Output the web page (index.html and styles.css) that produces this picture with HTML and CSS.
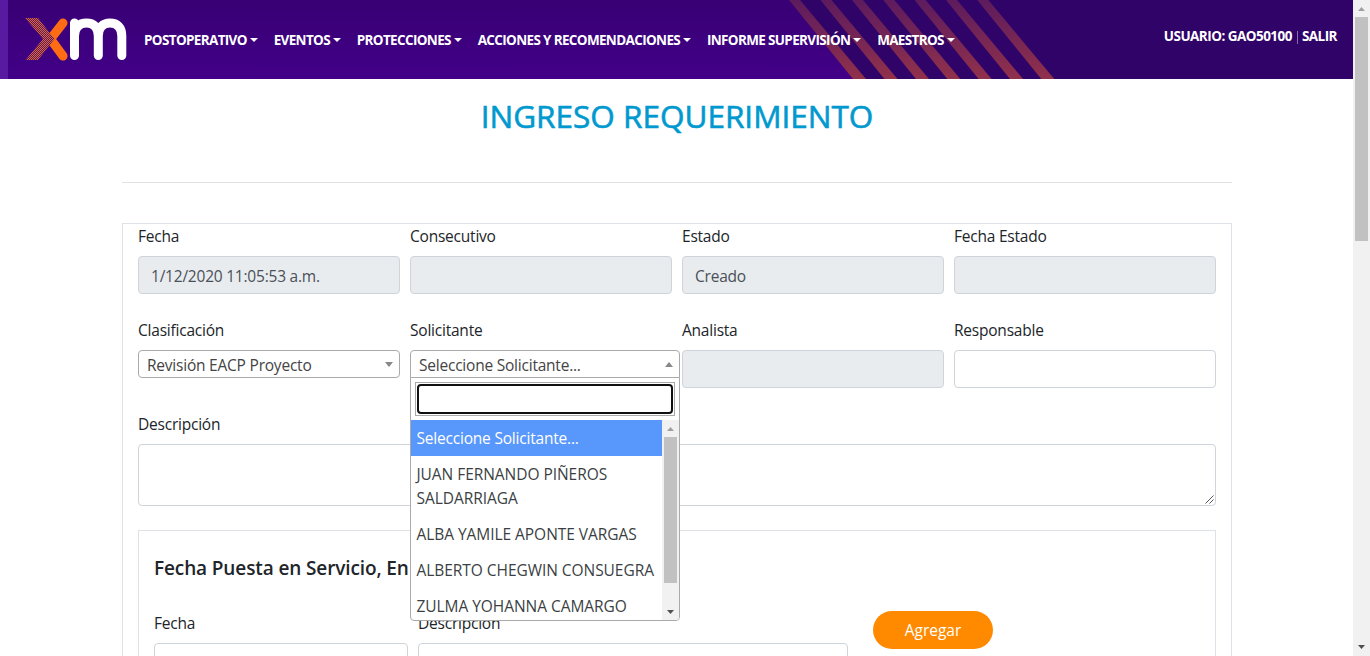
FILE: index.html
```html
<!DOCTYPE html>
<html lang="es">
<head>
<meta charset="utf-8">
<title>Ingreso requerimiento</title>
<link rel="stylesheet" href="styles.css">
</head>
<body>
<div class="page">
  <header class="topbar">
    <svg class="topbar-art" width="1345" height="79" viewBox="8 0 1345 79">
      <defs>
        <linearGradient id="stripe" x1="0" y1="0" x2="0" y2="79" gradientUnits="userSpaceOnUse"><stop offset="0" stop-color="#5d1b5e"/><stop offset="1" stop-color="#91314b"/></linearGradient>
      </defs>
      <path fill="#2f0368" d="M789 0H1353V79H853Z"/>
      <g fill="url(#stripe)">
        <path d="M789 0h11l66 79h-13z"/><path d="M820.5 0h11l66 79h-13z"/><path d="M852 0h11l66 79h-13z"/><path d="M883.3 0h11l66 79h-13z"/><path d="M914.6 0h11l66 79h-13z"/><path d="M946 0h11l66 79h-13z"/><path d="M977.3 0h11l66 79h-13z"/>
      </g>
    </svg>
    <svg class="logo" width="104" height="46" viewBox="24 16 104 46">
      <defs>
        <pattern id="mesh" width="2" height="2" patternUnits="userSpaceOnUse"><rect width="2" height="2" fill="#5a1c68"/><rect width="1" height="1" fill="#e0622f"/><rect x="1" y="1" width="1" height="1" fill="#e0622f"/></pattern>
      </defs>
      <path d="M63 23L50.500 39L63 56" fill="none" stroke="#ff6c13" stroke-width="9" stroke-linecap="round" stroke-linejoin="round"/>
      <path d="M25 18H38L54.500 39L38 60H25.500L43 39Z" fill="url(#mesh)"/>
      <path d="M74.500 55.500V23M74.500 36C74.500 27 79.500 23 86.500 23S98.300 27 98.300 36V55.500M98.300 36C98.300 27 103 23 110 23S121.800 27 121.800 36V55.500" fill="none" stroke="#fff" stroke-width="9" stroke-linecap="round"/>
    </svg>
    <nav class="menu">
      <a class="menu-item">POSTOPERATIVO</a>
      <a class="menu-item">EVENTOS</a>
      <a class="menu-item">PROTECCIONES</a>
      <a class="menu-item">ACCIONES Y RECOMENDACIONES</a>
      <a class="menu-item">INFORME SUPERVISIÓN</a>
      <a class="menu-item">MAESTROS</a>
    </nav>
    <div class="user"><span>USUARIO: GAO50100</span><i class="bar"></i><span>SALIR</span></div>
  </header>

  <main class="container">
    <h1 class="title">INGRESO REQUERIMIENTO</h1>
    <hr class="rule">
    <section class="panel">
      <div class="grid">
        <div class="field"><label class="label">Fecha</label><div class="input disabled date">1/12/2020 11:05:53 a.m.</div></div>
        <div class="field"><label class="label">Consecutivo</label><div class="input disabled"></div></div>
        <div class="field"><label class="label">Estado</label><div class="input disabled">Creado</div></div>
        <div class="field"><label class="label">Fecha Estado</label><div class="input disabled"></div></div>
        <div class="field"><label class="label">Clasificación</label>
          <div class="select"><span>Revisión EACP Proyecto</span><i class="arrow down"></i></div></div>
        <div class="field anchor"><label class="label">Solicitante</label>
          <div class="select open"><span>Seleccione Solicitante...</span><i class="arrow up"></i></div>
          <div class="dropdown">
            <div class="search"><div class="search-input"><div class="focus-ring"></div></div></div>
            <div class="results">
              <ul class="options">
                <li class="option active">Seleccione Solicitante...</li>
                <li class="option">JUAN FERNANDO PIÑEROS<br>SALDARRIAGA</li>
                <li class="option">ALBA YAMILE APONTE VARGAS</li>
                <li class="option">ALBERTO CHEGWIN CONSUEGRA</li>
                <li class="option">ZULMA YOHANNA CAMARGO</li>
              </ul>
              <div class="scroll"><svg class="scroll-btn" viewBox="0 0 17 17"><path d="M5 11h7L8.500 7z" fill="#a0a0a0"/></svg><div class="thumb list-thumb"></div><svg class="scroll-btn end" viewBox="0 0 17 17"><path d="M5 7h7L8.500 11z" fill="#505050"/></svg></div>
            </div>
          </div>
        </div>
        <div class="field"><label class="label">Analista</label><div class="input disabled"></div></div>
        <div class="field"><label class="label">Responsable</label><div class="input"></div></div>
        <div class="field wide"><label class="label">Descripción</label>
          <div class="input area"><svg class="grip" width="9" height="9" viewBox="0 0 9 9"><path d="M0.500 8.500L8.500 0.500M4.500 8.500L8.500 4.500" stroke="#555" fill="none"/></svg></div></div>
      </div>
      <section class="subpanel">
        <h2 class="subtitle">Fecha Puesta en Servicio, En</h2>
        <div class="subrow">
          <div class="field f-date"><label class="label">Fecha</label><div class="input"></div></div>
          <div class="field f-desc"><label class="label">Descripción</label><div class="input"></div></div>
          <button class="add">Agregar</button>
        </div>
      </section>
    </section>
  </main>
</div>
<div class="scroll page-scroll"><svg class="scroll-btn" viewBox="0 0 17 17"><path d="M5 11h7L8.500 7z" fill="#a0a0a0"/></svg><div class="thumb page-thumb"></div><svg class="scroll-btn end" viewBox="0 0 17 17"><path d="M5 6h7L8.500 10z" fill="#505050"/></svg></div>
</body>
</html>
```

FILE: styles.css
```css
* { box-sizing: border-box; }
body {
  margin: 0;
  height: 656px;
  overflow: hidden;
  display: flex;
  background: #fff;
  color: #212529;
  font: 15.5px/24px "Open Sans", "Noto Sans", sans-serif;
  letter-spacing: -0.22px;
}
.page { width: 1353px; height: 656px; overflow: hidden; }

.topbar {
  position: relative;
  height: 79px;
  display: flex;
  align-items: flex-start;
  padding-left: 16px;
  border-left: 8px solid #571aa0;
  background: linear-gradient(#380074, #420088);
  color: #fff;
  font-weight: 700;
  font-size: 13.5px;
  line-height: 20px;
}
.topbar-art { position: absolute; left: 0; top: 0; }
.logo { position: relative; margin-top: 16px; }
.menu { position: relative; display: flex; margin: 30px 0 0 16px; gap: 15.8px; letter-spacing: -0.65px; }
.menu-item { display: flex; align-items: center; white-space: nowrap; }
.menu-item::after {
  content: "";
  margin-left: 3px;
  border-top: 4px solid #fff;
  border-left: 4px solid transparent;
  border-right: 4px solid transparent;
}
.user { position: relative; display: flex; margin: 26px 16px 0 auto; letter-spacing: -0.53px; }
.bar { width: 1px; height: 13px; margin: 5px 4px 0 5px; background: #8b6bb0; }

.container { width: 1110px; margin: 0 auto 0 122px; }
.title {
  margin: 18px 0 0;
  text-align: center;
  color: #0099cf;
  font-size: 31.5px;
  line-height: 38px;
  font-weight: 400;
  letter-spacing: 0;
  -webkit-text-stroke: 0.6px #0099cf;
}
.rule { margin: 47px 0 40px; border: 0; border-top: 1px solid #e2e2e2; }
.panel { height: 500px; border: 1px solid #dee2e6; padding: 0 15px; }

.grid { display: grid; grid-template-columns: repeat(4, 262px); gap: 24px 10px; }
.field { display: flex; flex-direction: column; gap: 8px; }
.wide { grid-column: 1 / -1; }
.anchor { position: relative; }
.label { display: block; height: 24px; line-height: 25px; white-space: nowrap; }
.input {
  height: 38px;
  border: 1px solid #ced4da;
  border-radius: 4px;
  padding: 7px 12px;
  color: #495057;
  background: #fff;
}
.disabled { background: #e9ecef; }
.area { height: 62px; display: flex; justify-content: flex-end; align-items: flex-end; padding: 1px; }
.select {
  height: 28px;
  border: 1px solid #aaa;
  border-radius: 4px;
  padding: 2px 6px 0 8px;
  display: flex;
  justify-content: space-between;
  color: #444;
  white-space: nowrap;
}
.open { width: 270px; border-radius: 4px 4px 0 0; }
.arrow { border: 4px solid transparent; height: 0; width: 0; }
.down { border-top: 5px solid #888; border-bottom: 0; margin-top: 9px; }
.up { border-bottom: 5px solid #888; border-top: 0; margin-top: 9px; }

.dropdown {
  position: absolute;
  z-index: 2;
  left: 0;
  top: 59px;
  width: 270px;
  height: 244px;
  border: 1px solid #aaa;
  border-radius: 0 0 4px 4px;
  background: #fff;
  overflow: hidden;
}
.search { padding: 4px; height: 42px; }
.search-input { height: 34px; border: 1px solid #aaa; padding: 1px; }
.focus-ring { height: 30px; border: 2px solid #101010; border-radius: 4px; }
.results { display: flex; height: 200px; overflow: hidden; }
.options { width: 251px; margin: 0; padding: 0; list-style: none; letter-spacing: -0.05px; }
.option { padding: 6px 5.5px; line-height: 24px; white-space: nowrap; color: #3b3f43; }
.active { background: #5897fb; color: #fff; letter-spacing: -0.2px; }

.scroll { width: 17px; background: #f1f1f1; display: flex; flex-direction: column; }
.scroll-btn { width: 17px; height: 17px; flex: none; display: block; }
.end { margin-top: auto; }
.thumb { margin: 0 2px; background: #c1c1c1; flex: none; }
.list-thumb { height: 146px; }
.page-thumb { height: 224px; }
.page-scroll { height: 656px; }

.subpanel { margin-top: 24px; height: 300px; border: 1px solid #dee2e6; padding: 25px 15px; }
.subtitle { margin: 0; font-size: 19px; line-height: 24px; font-weight: 600; letter-spacing: -0.12px; white-space: nowrap; }
.subrow { display: flex; align-items: flex-start; gap: 10px; margin-top: 31px; }
.f-date { width: 254px; }
.f-desc { width: 430px; }
.add {
  width: 120px;
  height: 38px;
  margin-left: 15px;
  border: 0;
  border-radius: 19px;
  background: #ff8a00;
  color: #fff;
  font: inherit;
}
```
